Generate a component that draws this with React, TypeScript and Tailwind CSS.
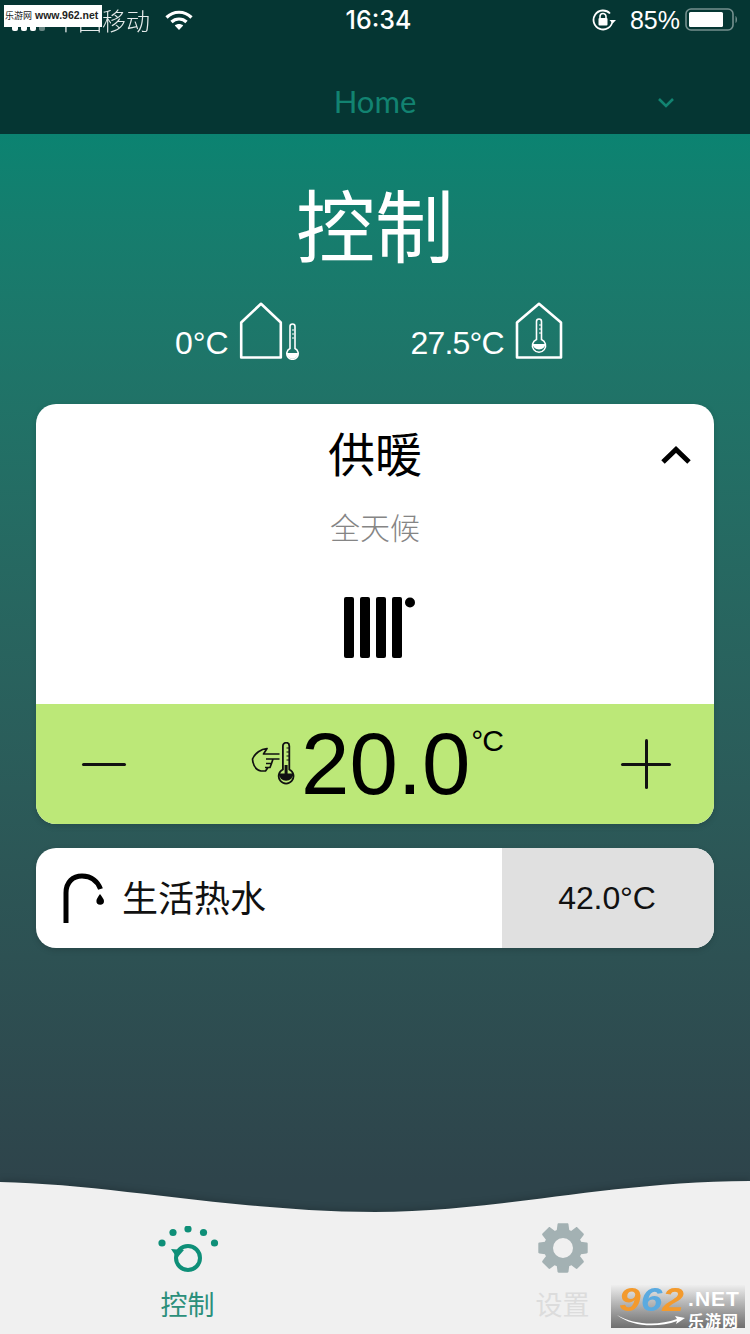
const cjk = "font-['Noto_Sans_CJK_SC',sans-serif]";
const latin = "font-['Liberation_Sans','Noto_Sans_CJK_SC',sans-serif]";

function Signal() {
  return (
    <svg width="34" height="14" viewBox="0 0 34 14" className="block">
      <rect x="0" y="6" width="6" height="8" rx="2" fill="#fff" />
      <rect x="9" y="3" width="6" height="11" rx="2" fill="#fff" />
      <rect x="18" y="1" width="6" height="13" rx="2" fill="#fff" />
      <rect x="27" y="0" width="6" height="14" rx="2" fill="#fff" fillOpacity="0.4" />
    </svg>
  );
}

function Wifi() {
  return (
    <svg width="28" height="22" viewBox="0 0 28 22" className="block">
      <path d="M1.5 8.5C8.5 1.5 19.5 1.5 26.5 8.5" fill="none" stroke="#fff" strokeWidth="3.2" />
      <path d="M6.5 13C10.5 9 17.5 9 21.5 13" fill="none" stroke="#fff" strokeWidth="3.2" />
      <path d="M14 21L9.8 16.4C12 14.4 16 14.4 18.2 16.4Z" fill="#fff" />
    </svg>
  );
}

function RotationLock() {
  return (
    <svg width="24" height="22" viewBox="0 0 24 22" className="block">
      <path d="M20.5 12A9.5 9.5 0 1 1 18 4.5" fill="none" stroke="#fff" strokeWidth="1.8" />
      <path d="M17.5 11H24L20.7 14.5Z" fill="#fff" />
      <rect x="6.5" y="9" width="9" height="7.5" rx="1" fill="#fff" />
      <path d="M8 9.5V7.5A3 3 0 0 1 14 7.5V9.5" fill="none" stroke="#fff" strokeWidth="1.6" />
    </svg>
  );
}

function Battery() {
  return (
    <svg width="54" height="24" viewBox="0 0 54 24" className="block">
      <rect x="1" y="1" width="47" height="21" rx="5" fill="none" stroke="#fff" strokeOpacity="0.45" strokeWidth="1.6" />
      <rect x="4" y="4" width="34" height="15" rx="1.5" fill="#fff" />
      <path d="M50.5 8C52.5 9 52.5 14 50.5 15Z" fill="#fff" fillOpacity="0.45" />
    </svg>
  );
}

function HouseOutside() {
  return (
    <svg width="62" height="58" viewBox="0 0 62 58" className="block">
      <path d="M2.2 55.5V20.5L22 1.8L41.8 20.5V55.5Z" fill="none" stroke="#fff" strokeWidth="2.6" strokeLinejoin="round" />
      <path d="M51 35V24.5A2.5 2.5 0 0 1 56 24.5V46.5A5.7 5.7 0 1 1 51 46.5Z" fill="none" stroke="#fff" strokeWidth="1.6" />
      <path d="M47.8 51H59.2A5.7 5.7 0 0 1 47.8 51Z" fill="#fff" />
      <path d="M53 28H55M53 32H55M53 36H55" stroke="#fff" strokeWidth="1" />
    </svg>
  );
}

function HouseInside() {
  return (
    <svg width="48" height="58" viewBox="0 0 48 58" className="block">
      <path d="M2 55.5V20.5L24 1.8L46 20.5V55.5Z" fill="none" stroke="#fff" strokeWidth="2.6" strokeLinejoin="round" />
      <path d="M21.5 37V19.5A2.5 2.5 0 0 1 26.5 19.5V37.5A6.6 6.6 0 1 1 21.5 37.5Z" fill="none" stroke="#fff" strokeWidth="1.6" />
      <path d="M17.5 42H30.5A6.6 6.6 0 0 1 17.5 42Z" fill="#fff" />
      <path d="M24 23H26M24 27H26M24 31H26" stroke="#fff" strokeWidth="1" />
    </svg>
  );
}

function Radiator() {
  return (
    <svg width="72" height="62" viewBox="0 0 72 62" className="block">
      <rect x="0" y="0" width="10" height="61" rx="2" fill="#000" />
      <rect x="16" y="0" width="10" height="61" rx="2" fill="#000" />
      <rect x="32" y="0" width="10" height="61" rx="2" fill="#000" />
      <rect x="48" y="0" width="10" height="61" rx="2" fill="#000" />
      <circle cx="66" cy="5.5" r="5" fill="#000" />
    </svg>
  );
}

function HandThermometer() {
  return (
    <svg width="46" height="44" viewBox="0 0 46 44" className="block">
      <path
        d="M29.5 12H13.5L17 6.5C11 7 5 11 2.5 17C3 23 6 28 11 29H15.5L18 25.5M15 25.5H20L21.5 21.5H16M21.5 21.5L23 17M29.5 17H16"
        fill="none"
        stroke="#111"
        strokeWidth="1.7"
        strokeLinejoin="round"
      />
      <path d="M32.9 27V3.9A3.2 3.2 0 0 1 39.3 3.9V27.5A7.4 7.4 0 1 1 32.9 27.5Z" fill="none" stroke="#111" strokeWidth="1.8" />
      <path d="M28.8 31.5H43.4A7.3 7.3 0 0 1 28.8 31.5Z" fill="#111" />
      <rect x="34.6" y="23" width="3" height="10" fill="#111" />
      <path d="M36.5 6H39M36.5 10H39M36.5 14H39M36.5 18H39" stroke="#111" strokeWidth="1" />
    </svg>
  );
}

function Faucet() {
  return (
    <svg width="44" height="52" viewBox="0 0 44 52" className="block">
      <path d="M5 50V20C5 9 12 3 21 3C31 3 37 9 39.5 16" fill="none" stroke="#000" strokeWidth="5" />
      <path d="M39 21C41 24 43 26 43 28A3.8 3.8 0 0 1 35.4 28C35.4 26 37 24 39 21Z" fill="#000" />
    </svg>
  );
}

function ControlIcon() {
  return (
    <svg width="62" height="50" viewBox="0 0 62 50" className="block">
      <g fill="#0e8f78">
        <circle cx="5" cy="17" r="3.6" />
        <circle cx="16" cy="6.5" r="3.6" />
        <circle cx="31" cy="3" r="3.6" />
        <circle cx="46.5" cy="6.5" r="3.6" />
        <circle cx="57.5" cy="17" r="3.6" />
      </g>
      <circle cx="31" cy="32" r="12" fill="none" stroke="#0e8f78" strokeWidth="4" />
      <path d="M14 23L27 24L20 32Z" fill="#0e8f78" />
    </svg>
  );
}

function Gear() {
  const angles = [0, 45, 90, 135, 180, 225, 270, 315];
  return (
    <svg width="50" height="50" viewBox="0 0 50 50" className="block">
      {angles.map((a) => (
        <path key={a} d="M19.5 1.5C19.5 0.8 20 0.3 20.7 0.3H29.3C30 0.3 30.5 0.8 30.5 1.5L31.5 9H18.5Z" fill="#a3b1b3" transform={`rotate(${a} 25 25)`} />
      ))}
      <circle cx="25" cy="25" r="14.5" fill="none" stroke="#a3b1b3" strokeWidth="9" />
    </svg>
  );
}

function Swoosh() {
  return (
    <svg width="70" height="14" viewBox="0 0 70 14" className="block">
      <path d="M1 2C18 12 42 13 61 6L59 3L69 5L60 11L61 8C42 15 16 14 1 2Z" fill="#fff" />
    </svg>
  );
}

export default function App() {
  return (
    <div className={`relative flex h-[1334px] w-[750px] flex-col overflow-hidden bg-gradient-to-b from-[#0b8371] from-[134px] to-[#2e444b] to-[1180px] ${latin}`}>
      <header className="h-[134px] shrink-0 bg-[#053633]">
        <div className="grid h-[40px] grid-cols-3 items-center pl-[12px] pr-[11px] text-white">
          <div className="flex items-center">
            <span className="mt-[8px]"><Signal /></span>
            <span className={`ml-[8px] text-[24px] leading-[40px] opacity-90 ${cjk} font-light`}>中国移动</span>
            <span className="ml-[15px]"><Wifi /></span>
          </div>
          <div className="pl-[6px] text-center text-[25px] font-medium leading-[40px] font-['Inter',sans-serif]">16:34</div>
          <div className="flex items-center justify-end">
            <RotationLock />
            <span className="ml-[14px] text-[25px] leading-[40px]">85%</span>
            <span className="ml-[5px]"><Battery /></span>
          </div>
        </div>
        <div className="relative flex h-[94px] items-start justify-center pt-[43px]">
          <span className="text-[31px] leading-[36px] text-[#128371] font-['Lato',sans-serif]">Home</span>
          <svg width="18" height="12" viewBox="0 0 18 12" className="absolute left-[657px] top-[57px]">
            <path d="M2 2L9 9L16 2" fill="none" stroke="#128371" strokeWidth="2.6" />
          </svg>
        </div>
      </header>

      <main className="flex flex-1 flex-col px-[36px]">
        <h1 className={`mt-[35px] text-center text-[79px] font-normal leading-[108px] text-white ${cjk}`}>控制</h1>

        <div className="mt-[25px] flex h-[58px] items-end pl-[139px] text-white">
          <div className="flex items-end">
            <span className="mb-[-2px] text-[32px] leading-[38px] tracking-[-0.1px]">0°C</span>
            <span className="ml-[11px]"><HouseOutside /></span>
          </div>
          <div className="ml-[109px] flex items-end">
            <span className="mb-[-2px] text-[32px] leading-[38px] tracking-[-0.8px]">27.5°C</span>
            <span className="ml-[11px]"><HouseInside /></span>
          </div>
        </div>

        <section className="mt-[44px] overflow-hidden rounded-[20px] bg-white shadow-[0_2px_6px_rgba(0,0,0,0.15)]">
          <div className="relative flex h-[300px] flex-col items-center">
            <div className={`mt-[15px] text-[47px] leading-[66px] text-black ${cjk}`}>供暖</div>
            <svg width="30" height="20" viewBox="0 0 30 20" className="absolute right-[23px] top-[41px]">
              <path d="M2 17L15 4.5L28 17" fill="none" stroke="#000" strokeWidth="5" />
            </svg>
            <div className={`mt-[20px] text-[30px] font-light leading-[42px] text-[#858585] ${cjk}`}>全天候</div>
            <div className="ml-[10px] mt-[50px]"><Radiator /></div>
          </div>
          <div className="flex h-[120px] items-center bg-[#bce878] pl-[46px] pr-[43px]">
            <div className="h-[3px] w-[44px] rounded-full bg-[#111]" />
            <div className="ml-[124px]"><HandThermometer /></div>
            <div className="ml-[5px] flex items-start">
              <span className="text-[87px] leading-[102px] text-black">20.0</span>
              <span className="ml-[1px] mt-[12px] text-[30px] leading-[32px] tracking-[-1px] text-black">°C</span>
            </div>
            <div className="relative ml-auto h-[50px] w-[50px]">
              <div className="absolute left-0 top-[23.5px] h-[3px] w-[50px] rounded-full bg-[#111]" />
              <div className="absolute left-[23.5px] top-0 h-[50px] w-[3px] rounded-full bg-[#111]" />
            </div>
          </div>
        </section>

        <section className="mt-[24px] flex h-[100px] overflow-hidden rounded-[20px] bg-white shadow-[0_2px_6px_rgba(0,0,0,0.15)]">
          <div className="flex w-[466px] items-center pl-[25px]">
            <span className="mt-[1px]"><Faucet /></span>
            <span className={`mb-[4px] ml-[17px] text-[36px] leading-[50px] text-[#111] ${cjk}`}>生活热水</span>
          </div>
          <div className="flex flex-1 items-center justify-center bg-[#e0e0e0] pr-[2px] text-[32px] tracking-[-0.1px] text-[#111]">42.0°C</div>
        </section>
      </main>

      <footer className="relative flex h-[164px] shrink-0 items-start">
        <svg width="750" height="164" viewBox="0 0 750 164" className="absolute inset-0 drop-shadow-[0_-2px_3px_rgba(0,0,0,0.18)]">
          <path d="M0 12C110 14 240 42 375 42C500 42 600 12 750 11V164H0Z" fill="#f0f0f0" />
        </svg>
        <div className="relative flex w-full">
          <div className="flex w-[375px] flex-col items-center pt-[56px]">
            <ControlIcon />
            <span className={`mt-[9px] text-[27px] leading-[38px] text-[#2b8f7b] ${cjk}`}>控制</span>
          </div>
          <div className="flex w-[375px] flex-col items-center pt-[53px]">
            <Gear />
            <span className={`mt-[12px] text-[27px] leading-[38px] text-[#dcdcdc] ${cjk}`}>设置</span>
          </div>
        </div>
      </footer>

      <div className="absolute left-[4px] top-[5px] flex h-[22px] w-[98px] items-center whitespace-nowrap bg-white pl-[1px] font-bold text-[#222]">
        <span className={`text-[9px] font-normal ${cjk}`}>乐游网</span>
        <span className="ml-[3px] text-[10.5px]">www.962.net</span>
      </div>

      <div className="absolute left-[611px] top-[1285px] flex h-[43px] w-[134px] flex-col bg-gradient-to-b from-[#eeeeee] to-[#6f6f6f] pl-[8px] pt-[1px] leading-none">
        <div className="flex h-[27px] items-start">
          <div className="mr-[11px] flex origin-left scale-x-[1.18] italic text-[33px] font-black leading-[27px]">
            <span className="text-[#f39a2d]">9</span>
            <span className="text-[#5aaae0]">6</span>
            <span className="text-[#f39a2d]">2</span>
          </div>
          <span className="ml-[3px] mt-[2px] text-[21px] font-bold leading-[22px] tracking-[1px] text-white">.NET</span>
        </div>
        <div className="flex items-center">
          <span className="ml-[-3px]"><Swoosh /></span>
          <span className={`ml-[2px] text-[16px] font-bold leading-[14px] tracking-[1px] text-white ${cjk}`}>乐游网</span>
        </div>
      </div>
    </div>
  );
}
